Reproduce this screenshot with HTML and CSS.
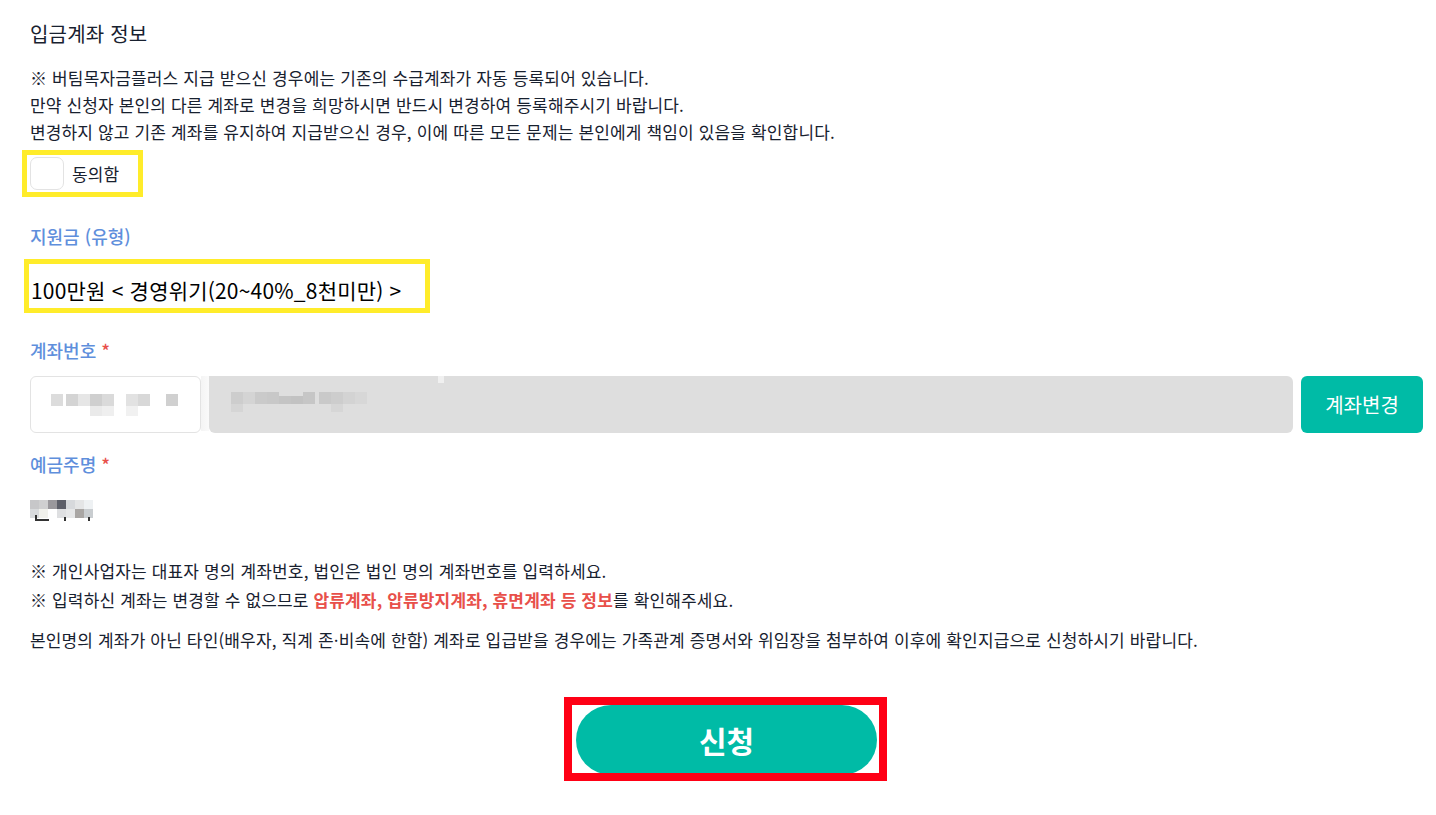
FILE: index.html
```html
<!DOCTYPE html>
<html lang="ko">
<head>
<meta charset="utf-8">
<title>입금계좌 정보</title>
<link rel="stylesheet" href="styles.css">
</head>
<body>
<div class="page">
  <h2 class="title">입금계좌 정보</h2>
  <div class="notice">
    <p>※ 버팀목자금플러스 지급 받으신 경우에는 기존의 수급계좌가 자동 등록되어 있습니다.</p>
    <p>만약 신청자 본인의 다른 계좌로 변경을 희망하시면 반드시 변경하여 등록해주시기 바랍니다.</p>
    <p>변경하지 않고 기존 계좌를 유지하여 지급받으신 경우, 이에 따른 모든 문제는 본인에게 책임이 있음을 확인합니다.</p>
  </div>
  <div class="agree hl-yellow">
    <span class="checkbox"></span>
    <span class="agree-text">동의함</span>
  </div>

  <div class="label label-type">지원금 (유형)</div>
  <div class="amount hl-yellow">100만원 &lt; 경영위기(20~40%_8천미만) &gt;</div>

  <div class="label label-account">계좌번호 <span class="req">*</span></div>
  <div class="account-row">
    <div class="bank-input">
      <svg class="blur" width="160" height="30" viewBox="0 0 160 30">
        <rect x="20" y="4" width="12" height="12" fill="#dcdcdc"/>
        <rect x="35" y="4" width="12" height="12" fill="#d4d4d4"/>
        <rect x="47" y="4" width="12" height="12" fill="#e6e6e6"/>
        <rect x="59" y="4" width="12" height="12" fill="#cfcfcf"/>
        <rect x="71" y="4" width="12" height="12" fill="#dadada"/>
        <rect x="59" y="16" width="12" height="10" fill="#eaeaea"/>
        <rect x="71" y="16" width="12" height="10" fill="#efefef"/>
        <rect x="95" y="4" width="12" height="12" fill="#e2e2e2"/>
        <rect x="107" y="4" width="12" height="12" fill="#d8d8d8"/>
        <rect x="135" y="4" width="12" height="12" fill="#d0d0d0"/>
        <rect x="95" y="16" width="12" height="10" fill="#f1f1f1"/>
      </svg>
    </div>
    <div class="fade"></div>
    <div class="number-input">
      <svg class="blur" width="180" height="30" viewBox="0 0 180 30">
        <rect x="22" y="2" width="12" height="12" fill="#cdcdcd"/>
        <rect x="34" y="2" width="12" height="12" fill="#d4d4d4"/>
        <rect x="46" y="2" width="12" height="12" fill="#cacaca"/>
        <rect x="58" y="2" width="12" height="12" fill="#c8c8c8"/>
        <rect x="70" y="6" width="12" height="8" fill="#c4c4c4"/>
        <rect x="82" y="6" width="12" height="8" fill="#c2c2c2"/>
        <rect x="94" y="2" width="12" height="12" fill="#c6c6c6"/>
        <rect x="110" y="2" width="12" height="12" fill="#c9c9c9"/>
        <rect x="122" y="2" width="12" height="12" fill="#cdcdcd"/>
        <rect x="134" y="2" width="12" height="12" fill="#d3d3d3"/>
        <rect x="146" y="2" width="12" height="12" fill="#d7d7d7"/>
        <rect x="22" y="14" width="12" height="8" fill="#d5d5d5"/>
        <rect x="122" y="14" width="12" height="8" fill="#d6d6d6"/>
      </svg>
      <span class="notch"></span>
    </div>
    <button class="btn-change" type="button">계좌변경</button>
  </div>

  <div class="label label-holder">예금주명 <span class="req">*</span></div>
  <div class="holder">
    <svg width="70" height="30" viewBox="0 0 70 30">
      <rect x="0" y="2" width="9" height="9" fill="#c7c7c9"/>
      <rect x="9" y="2" width="9" height="9" fill="#cfcfd0"/>
      <rect x="18" y="2" width="9" height="9" fill="#9a989c"/>
      <rect x="27" y="2" width="9" height="9" fill="#5d5f69"/>
      <rect x="36" y="2" width="9" height="9" fill="#d7d9dc"/>
      <rect x="45" y="2" width="9" height="9" fill="#e4e5e6"/>
      <rect x="54" y="2" width="9" height="9" fill="#eef1f3"/>
      <rect x="0" y="11" width="9" height="9" fill="#d9dbdd"/>
      <rect x="9" y="11" width="9" height="9" fill="#f1f1ec"/>
      <rect x="27" y="11" width="9" height="9" fill="#dedfe1"/>
      <rect x="36" y="11" width="9" height="9" fill="#e6e7e8"/>
      <rect x="45" y="11" width="9" height="9" fill="#a9a6a4"/>
      <rect x="54" y="11" width="9" height="9" fill="#c9cdd0"/>
      <rect x="5" y="21" width="14" height="2" fill="#333"/>
      <rect x="5" y="17" width="2" height="5" fill="#333"/>
      <rect x="34" y="19" width="2" height="4" fill="#333"/>
      <rect x="58" y="19" width="2" height="4" fill="#333"/>
    </svg>
  </div>

  <div class="notes">
    <p>※ 개인사업자는 대표자 명의 계좌번호, 법인은 법인 명의 계좌번호를 입력하세요.</p>
    <p>※ 입력하신 계좌는 변경할 수 없으므로 <strong class="warn">압류계좌, 압류방지계좌, 휴면계좌 등 정보</strong>를 확인해주세요.</p>
  </div>
  <p class="extra">본인명의 계좌가 아닌 타인(배우자, 직계 존·비속에 한함) 계좌로 입급받을 경우에는 가족관계 증명서와 위임장을 첨부하여 이후에 확인지급으로 신청하시기 바랍니다.</p>

  <div class="submit-wrap">
    <button class="btn-submit" type="button">신청</button>
    <span class="hl-red"></span>
  </div>
</div>
</body>
</html>
```

FILE: styles.css
```css
* { box-sizing: border-box; }
html, body { margin: 0; padding: 0; background: #fff; }
body {
  font-family: "Noto Sans CJK KR", "Noto Sans", sans-serif;
  color: #18212f;
  letter-spacing: 0.15px;
}
.page {
  padding: 20px 13px 30px 30px;
}
.title {
  margin: 0;
  font-size: 20px;
  font-weight: 400;
  line-height: 28px;
  color: #18212f;
  letter-spacing: 0.2px;
}
.notice {
  margin-top: 16px;
  font-size: 17px;
  line-height: 27px;
}
.notice p, .notes p { margin: 0; }
.agree {
  display: flex;
  width: max-content;
  align-items: center;
  gap: 8px;
  margin-top: 5px;
  margin-left: -8px;
  padding: 2px 19px 2px 3px;
  height: 47px;
}
.hl-yellow {
  border: 5px solid #ffec2a;
}
.checkbox {
  width: 34px;
  height: 33px;
  border: 1px solid #e3e3e3;
  border-radius: 7px;
  background: #fff;
}
.agree-text { font-size: 17px; }

.label {
  color: #5f8fdc;
  font-size: 18px;
  font-weight: 500;
  line-height: 26px;
  letter-spacing: 0;
}
.label-type { margin-top: 26px; }
.label-account { margin-top: 24px; }
.label-holder { margin-top: 18px; }
.req { color: #e8504a; }
.amount {
  display: block;
  width: max-content;
  margin-top: 10px;
  margin-left: -6px;
  padding: 8px 24px 0 2px;
  height: 54px;
  line-height: 36px;
  font-size: 21px;
  color: #000;
  letter-spacing: 0.2px;
}
.account-row {
  display: flex;
  align-items: stretch;
  height: 57px;
  margin-top: 13px;
}
.bank-input {
  width: 171px;
  border: 1px solid #e3e3e3;
  border-radius: 6px;
  background: #fff;
  display: flex;
  align-items: center;
}
.fade {
  width: 8px;
  background: linear-gradient(to right, #f4f4f4, #fafafa);
  margin: 0 0 2px;
}
.number-input {
  position: relative;
  flex: 1;
  background: #dedede;
  border-radius: 0 6px 6px 6px;
  display: flex;
  align-items: center;
}
.notch {
  position: absolute;
  left: 229px;
  top: 0;
  width: 6px;
  height: 7px;
  background: #f0f0f0;
}
.blur { display: block; }
.btn-change {
  margin-left: 8px;
  width: 122px;
  border: 0;
  border-radius: 6px;
  background: #00bba6;
  color: #fff;
  font-family: inherit;
  font-size: 20px;
  letter-spacing: 0;
  cursor: pointer;
}
.holder {
  margin-top: 21px;
  height: 30px;
}
.holder svg { display: block; }
.notes {
  margin-top: 28px;
  font-size: 17px;
  line-height: 29px;
}
.warn { color: #e8504a; font-weight: 700; }
.extra {
  margin: 13px 0 0;
  font-size: 17px;
  line-height: 26px;
}
.submit-wrap {
  position: relative;
  width: 301px;
  height: 70px;
  margin: 52px auto 0;
}
.btn-submit {
  width: 100%;
  height: 100%;
  border: 0;
  border-radius: 35px;
  background: #00bba6;
  color: #fff;
  font-family: inherit;
  font-size: 30px;
  font-weight: 700;
  letter-spacing: 0;
  cursor: pointer;
}
.hl-red {
  position: absolute;
  left: -12px;
  right: -10px;
  top: -8px;
  bottom: -6px;
  border: 8px solid #ff0015;
  pointer-events: none;
}
```
